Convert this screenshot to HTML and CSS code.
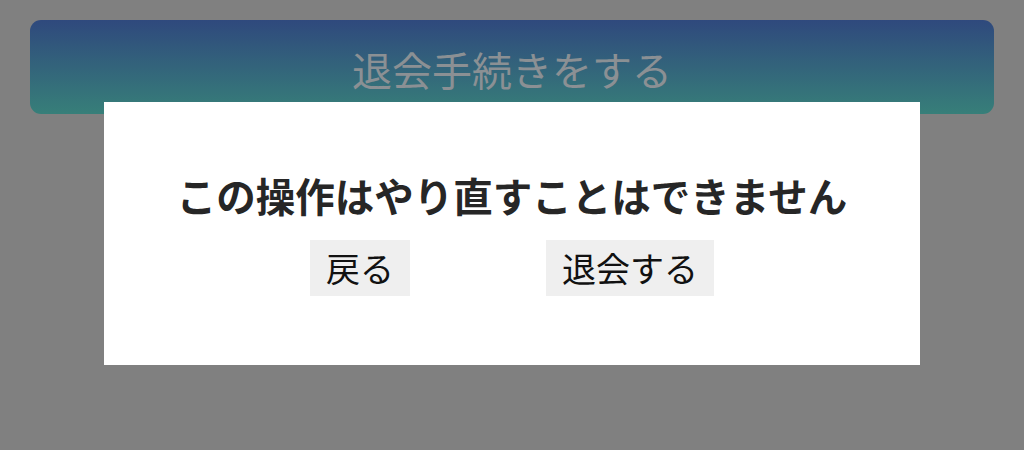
FILE: index.html
```html
<!DOCTYPE html>
<html lang="ja">
<head>
<meta charset="utf-8">
<link rel="stylesheet" href="styles.css">
</head>
<body>
<div class="page">
  <button class="withdraw">退会手続きをする</button>
</div>
<div class="modal">
  <p class="modal-title">この操作はやり直すことはできません</p>
  <div class="modal-actions">
    <button class="modal-btn">戻る</button>
    <button class="modal-btn">退会する</button>
  </div>
</div>
</body>
</html>
```
FILE: styles.css
```css
html, body {
  margin: 0;
  padding: 0;
}
body {
  width: 1024px;
  height: 450px;
  background: #808080;
  font-family: "Noto Sans CJK JP", "Noto Sans", sans-serif;
  position: relative;
  overflow: hidden;
}
.page {
  padding: 20px 30px 0;
}
.withdraw {
  display: block;
  width: 100%;
  height: 94px;
  border: none;
  border-radius: 11px;
  background: linear-gradient(to bottom, #2f497d, #377f79);
  color: #8b9094;
  font-family: inherit;
  font-size: 40px;
  padding: 3px 0 0;
  line-height: 1;
}
.modal {
  position: absolute;
  left: 104px;
  top: 102px;
  width: 816px;
  height: 263px;
  background: #fff;
  box-sizing: border-box;
  padding-top: 69px;
  display: flex;
  flex-direction: column;
  align-items: center;
}
.modal-title {
  margin: 0;
  font-size: 39.5px;
  font-weight: 700;
  line-height: 48px;
  color: #262626;
}
.modal-actions {
  margin-top: 21px;
  display: flex;
  gap: 136px;
}
.modal-btn {
  border: none;
  background: #efefef;
  color: #111;
  font-family: inherit;
  font-size: 34px;
  line-height: 40px;
  padding: 8px 16px;
  height: 56px;
}
```
